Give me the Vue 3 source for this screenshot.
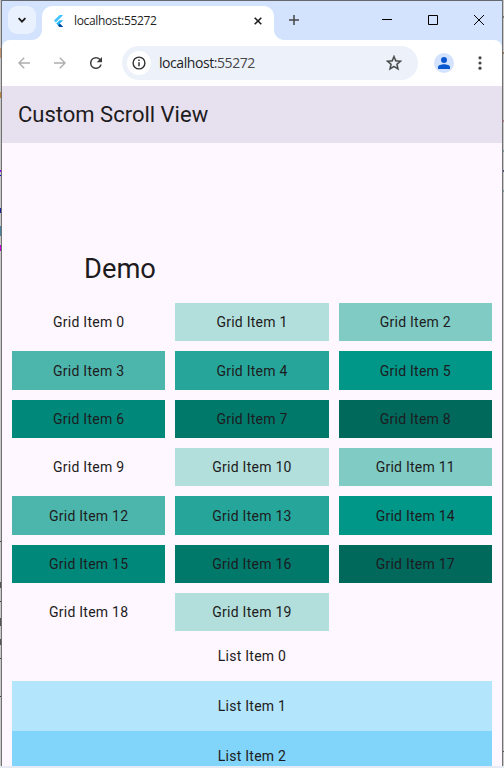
<script setup>
const teal = ['transparent', '#b2dfdb', '#80cbc4', '#4db6ac', '#26a69a', '#009688', '#00897b', '#00796b', '#00695c']
const blue = ['transparent', '#b3e5fc', '#81d4fa']
const gridItems = Array.from({ length: 20 }, (_, i) => ({ label: `Grid Item ${i}`, color: teal[i % 9] }))
const listItems = blue.map((color, i) => ({ label: `List Item ${i}`, color }))
</script>

<template>
  <div class="desktop">
    <div class="edge left"></div>
    <div class="window">
      <header class="tabstrip">
        <button class="search">
          <svg width="10" height="10" viewBox="0 0 10 10"><path d="M1.6 3.2 5 6.6 8.4 3.2" fill="none" stroke="#1f1f1f" stroke-width="1.9" /></svg>
        </button>
        <div class="tab">
          <svg class="flutter" width="12" height="14" viewBox="0 0 12 14">
            <path d="M6.6 1H10.2L2.8 8.4 1 6.6z" fill="#40c4ff" />
            <path d="M6.6 6.2H10.2L6.8 9.6 10.2 13H6.6L3.2 9.6z" fill="#29b6f6" />
            <path d="M5 11.4 6.8 9.6 10.2 13H6.6z" fill="#01479b" />
          </svg>
          <span class="tab-title">localhost:55272</span>
          <svg class="close-tab" width="8" height="8" viewBox="0 0 8 8"><path d="M.7.7l6.6 6.6M7.3.7.7 7.3" stroke="#1f1f1f" stroke-width="1.6" /></svg>
        </div>
        <svg class="plus" width="10" height="10" viewBox="0 0 10 10"><path d="M5 0v10M0 5h10" stroke="#444746" stroke-width="1.5" /></svg>
        <div class="controls">
          <svg width="10" height="10" viewBox="0 0 10 10"><path d="M0 4.5h10" stroke="#000" /></svg>
          <svg width="10" height="10" viewBox="0 0 10 10"><path d="M.5.5h9v9h-9z" fill="none" stroke="#000" /></svg>
          <svg width="10" height="10" viewBox="0 0 10 10"><path d="M0 0l10 10M10 0 0 10" stroke="#000" /></svg>
        </div>
      </header>

      <div class="toolbar">
        <svg class="back" width="12" height="12" viewBox="0 0 12 12"><path d="M12 6H1.2M6.2.7.9 6l5.3 5.3" fill="none" stroke="#acaead" stroke-width="1.4" /></svg>
        <svg class="forward" width="12" height="12" viewBox="0 0 12 12"><path d="M0 6h10.8M5.8.7 11.1 6l-5.3 5.3" fill="none" stroke="#acaead" stroke-width="1.4" /></svg>
        <svg class="reload" width="12" height="12" viewBox="4 4 16 16"><path d="M17.65 6.35A7.96 7.96 0 0 0 12 4a8 8 0 1 0 7.73 10h-2.08A6 6 0 1 1 12 6c1.66 0 3.14.69 4.22 1.78L13 11h7V4z" fill="#3c3e3d" /></svg>
        <div class="omnibox">
          <span class="info">
            <svg width="14" height="14" viewBox="0 0 14 14"><circle cx="7" cy="7" r="5.9" fill="none" stroke="#303231" stroke-width="1.4" /><path d="M7 6.3v4M7 3.6v1.5" stroke="#303231" stroke-width="1.5" /></svg>
          </span>
          <span class="url">localhost<span class="port">:55272</span></span>
          <svg class="star" width="16" height="16" viewBox="2 2 20 20"><path d="M22 9.24l-7.19-.62L12 2 9.19 8.63 2 9.24l5.46 4.73L5.82 21 12 17.27 18.18 21l-1.63-7.03L22 9.24zM12 15.4l-3.76 2.27 1-4.28-3.32-2.88 4.38-.38L12 6.1l1.71 4.04 4.38.38-3.32 2.88 1 4.28L12 15.4z" fill="#444746" stroke="#444746" stroke-width=".3" /></svg>
        </div>
        <span class="avatar">
          <svg width="12" height="12" viewBox="0 0 12 12"><circle cx="6" cy="3" r="3" fill="#0b57d0" /><path d="M0 12v-1.9C0 8.1 3.5 7.2 6 7.2s6 .9 6 2.9V12z" fill="#0b57d0" /></svg>
        </span>
        <svg class="menu" width="4" height="14" viewBox="0 0 4 14"><g fill="#444746"><circle cx="2" cy="1.8" r="1.6" /><circle cx="2" cy="7" r="1.6" /><circle cx="2" cy="12.2" r="1.6" /></g></svg>
      </div>

      <main class="page">
        <div class="appbar">Custom Scroll View</div>
        <div class="flexible">Demo</div>
        <div class="grid">
          <div v-for="item in gridItems" :key="item.label" class="cell" :style="{ background: item.color }">{{ item.label }}</div>
        </div>
        <div class="list">
          <div v-for="item in listItems" :key="item.label" class="row" :style="{ background: item.color }">{{ item.label }}</div>
        </div>
      </main>
    </div>
    <div class="edge right"></div>
  </div>
</template>

<style>
body { overflow: hidden; }
</style>

<style scoped>
.desktop {
  display: grid;
  grid-template-columns: 2px 500px 2px;
  width: 504px;
  height: 768px;
  overflow: hidden;
  background: #e6eaf2;
}
.edge { height: 766px; border: 0 solid #717171; box-sizing: border-box; }
.left {
  border-right-width: 1px;
  background: linear-gradient(#c8c8c8 0 48px, #c09472 48px 58px, #c8c8c8 58px 92px, #b9833d 92px 98px, #c8c8c8 98px 170px, #80f 170px 172px, #c8c8c8 172px 175px, #00c 175px 176px, #c8c8c8 176px 208px, #229 208px 213px, #c8c8c8 213px 226px, #4983a0 226px 236px, #c8c8c8 236px 245px, #b0c 245px 251px, #c8c8c8 251px 541px, #444 541px 542px, #c8c8c8 542px 582px, #555 582px 588px, #c8c8c8 588px 601px, #444 601px 602px, #c8c8c8 602px 618px, #555 618px 626px, #c8c8c8 626px 639px, #555 639px 645px, #c8c8c8 645px 658px, #444 658px 659px, #c8c8c8 659px 696px, #444 696px 697px, #c8c8c8 697px);
}
.right {
  border-left-width: 1px;
  background: linear-gradient(#c8c8c8 0 16px, #777 16px 18px, #c8c8c8 18px 52px, #a17851 52px 54px, #c8c8c8 54px 120px, #b77f83 120px 122px, #c8c8c8 122px 150px, #7d9ba3 150px 152px, #c8c8c8 152px 170px, #55558c 170px 172px, #c8c8c8 172px 190px, #7d9ba3 190px 192px, #c8c8c8 192px 751px, #555 751px 752px, #c8c8c8 752px);
}
.window {
  display: flex;
  flex-direction: column;
  height: 766px;
  overflow: hidden;
  background: #d3e3fd;
}
.tabstrip {
  display: flex;
  flex: none;
  box-sizing: border-box;
  height: 40px;
  border-top: 1px solid #65686e;
}
.search {
  display: flex;
  align-items: center;
  justify-content: center;
  width: 28px;
  height: 28px;
  margin: 5px 0 0 6px;
  padding: 0;
  border: 0;
  border-radius: 9px;
  background: #e9f0fe;
}
.tab {
  position: relative;
  display: flex;
  align-items: center;
  box-sizing: border-box;
  width: 232px;
  height: 34px;
  margin: 5px 0 0 6px;
  padding: 0 12px 5px 11px;
  border-radius: 10px 10px 0 0;
  background: #fff;
}
.tab::before,
.tab::after {
  content: '';
  position: absolute;
  bottom: 0;
  width: 10px;
  height: 10px;
}
.tab::before { right: 100%; background: radial-gradient(circle at 0 0, transparent 9.5px, #fff 10.2px); }
.tab::after { left: 100%; background: radial-gradient(circle at 100% 0, transparent 9.5px, #fff 10.2px); }
.tab-title {
  flex: 1;
  margin-left: 9px;
  font: 12px/16px "Open Sans", "Noto Sans", sans-serif;
  letter-spacing: -0.35px;
  color: #1f1f1f;
}
.plus { margin: 14px 0 0 15px; }
.controls { display: flex; gap: 36px; margin: 14px 18px 0 auto; }
.toolbar {
  display: flex;
  flex: none;
  align-items: center;
  box-sizing: border-box;
  height: 46px;
  border-radius: 8px 8px 0 0;
  background: #fff;
}
.back { margin-left: 16px; }
.forward { margin-left: 24px; }
.reload { margin-left: 24px; }
.omnibox {
  display: flex;
  align-items: center;
  box-sizing: border-box;
  width: 296px;
  height: 34px;
  margin-left: 20px;
  padding: 0 16px 0 5px;
  border-radius: 17px;
  background: #ecf1fa;
}
.info {
  display: flex;
  align-items: center;
  justify-content: center;
  width: 24px;
  height: 24px;
  border-radius: 50%;
  background: #fff;
}
.url {
  flex: 1;
  margin-left: 8px;
  font: 14px/18px "Open Sans", "Noto Sans", sans-serif;
  letter-spacing: -0.43px;
  color: #1f1f1f;
}
.port { color: #474747; }
.avatar {
  display: flex;
  align-items: center;
  justify-content: center;
  width: 20px;
  height: 20px;
  margin-left: 16px;
  border-radius: 50%;
  background: #d3e3fd;
}
.menu { margin-left: 24px; }
.page {
  flex: 1;
  background: #fef7ff;
  color: #1d1b20;
  font-family: Roboto, sans-serif;
}
.appbar {
  height: 57px;
  padding-left: 16px;
  background: #e7e0ef;
  font-size: 22px;
  line-height: 57px;
}
.flexible {
  box-sizing: border-box;
  height: 160px;
  padding: 109px 0 0 82px;
  font-size: 27.3px;
  line-height: 34px;
}
.grid {
  display: grid;
  grid-template-columns: repeat(3, 1fr);
  grid-auto-rows: 38.35px;
  gap: 10px;
  padding: 0 10px;
}
.cell,
.row {
  display: flex;
  align-items: center;
  justify-content: center;
  font-size: 14px;
  letter-spacing: 0.25px;
}
.list { padding: 0 10px; }
.row { height: 50px; }
</style>
